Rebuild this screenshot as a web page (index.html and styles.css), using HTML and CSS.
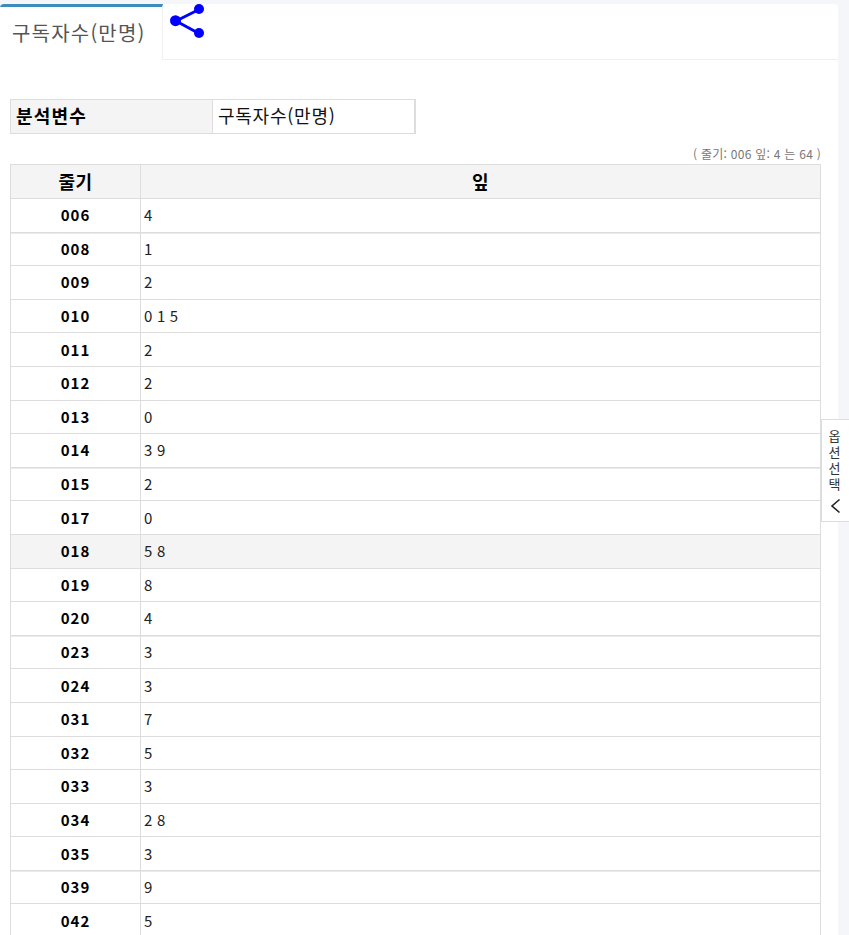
FILE: index.html
```html
<!DOCTYPE html>
<html lang="ko">
<head>
<meta charset="utf-8">
<title>줄기 잎</title>
<link rel="stylesheet" href="styles.css">
</head>
<body>
<div class="card">
  <div class="tabs">
    <div class="tab">구독자수(만명)</div>
    <div class="tab-share">
      <svg class="share" width="40" height="40" viewBox="0 0 40 40">
        <g fill="#0000ff" stroke="#0000ff">
          <path d="M29 5.500 6 17M6 17 29 29.500" stroke-width="3" fill="none"/>
          <circle cx="29" cy="5" r="5" stroke="none"/>
          <circle cx="5.500" cy="16.700" r="5.500" stroke="none"/>
          <circle cx="29" cy="29" r="5" stroke="none"/>
        </g>
      </svg>
    </div>
  </div>
  <div class="content">
    <table class="vars">
      <tr><th>분석변수</th><td>구독자수(만명)</td></tr>
    </table>
    <p class="note">( 줄기: 006 잎: 4 는 64 )</p>
    <table class="stem">
      <thead><tr><th class="c1">줄기</th><th>잎</th></tr></thead>
      <tbody>
        <tr class="thick"><th>006</th><td>4</td></tr>
        <tr><th>008</th><td>1</td></tr>
        <tr><th>009</th><td>2</td></tr>
        <tr><th>010</th><td>0 1 5</td></tr>
        <tr><th>011</th><td>2</td></tr>
        <tr><th>012</th><td>2</td></tr>
        <tr><th>013</th><td>0</td></tr>
        <tr class="thick"><th>014</th><td>3 9</td></tr>
        <tr><th>015</th><td>2</td></tr>
        <tr><th>017</th><td>0</td></tr>
        <tr class="hover"><th>018</th><td>5 8</td></tr>
        <tr><th>019</th><td>8</td></tr>
        <tr class="thick"><th>020</th><td>4</td></tr>
        <tr><th>023</th><td>3</td></tr>
        <tr><th>024</th><td>3</td></tr>
        <tr><th>031</th><td>7</td></tr>
        <tr><th>032</th><td>5</td></tr>
        <tr><th>033</th><td>3</td></tr>
        <tr><th>034</th><td>2 8</td></tr>
        <tr class="thick"><th>035</th><td>3</td></tr>
        <tr><th>039</th><td>9</td></tr>
        <tr><th>042</th><td>5</td></tr>
      </tbody>
    </table>
  </div>
</div>
<div class="side">
  <span class="side-text">옵션선택</span>
  <svg class="chev" width="12" height="16" viewBox="0 0 12 16"><path d="M9.500 1.500 2 8 9.500 14.500" fill="none" stroke="#222" stroke-width="1.600"/></svg>
</div>
</body>
</html>
```
FILE: styles.css
```css
html, body { margin: 0; padding: 0; height: 935px; overflow: hidden; }
body {
  background: #f4f6f9;
  font-family: "Noto Sans CJK KR", "Noto Sans", sans-serif;
  color: #111;
  padding-top: 4px;
  box-sizing: border-box;
}
.card {
  width: 838px;
  background: #fff;
  border-radius: 4px 4px 0 0;
  height: 931px;
  overflow: hidden;
}
.tabs {
  display: flex;
  height: 55px;
  border-bottom: 1px solid #f0f0f0;
}
.tab {
  width: 163px;
  box-sizing: border-box;
  height: 56px;
  border-top: 3px solid #3c8dbc;
  border-right: 1px solid #f0f0f0;
  background: #fff;
  padding: 12px 0 0 12px;
  font-size: 20px;
  letter-spacing: 1.2px;
  line-height: 28px;
  white-space: nowrap;
  color: #555;
}
.tab-share { flex: 1; }
.share { display: block; margin: 0 0 0 7px; }
.content { padding: 39px 17px 0 10px; }
.vars {
  border-collapse: collapse;
  width: 406px;
  table-layout: fixed;
  font-size: 18px;
  letter-spacing: 0.75px;
  border-right: 2px solid #ddd;
}
.vars th, .vars td {
  border: 1px solid #ddd;
  height: 29px;
  padding: 0 5px 4px;
  text-align: left;
}
.vars th { width: 191px; background: #f4f4f4; font-weight: 700; letter-spacing: 1.2px; color: #000; }
.vars td { color: #111; }
.note {
  margin: 10px 0 0;
  height: 20px;
  text-align: right;
  font-size: 12px;
  letter-spacing: 0.26px;
  line-height: 20px;
  color: #777;
}
.stem {
  border-collapse: collapse;
  width: 811px;
  table-layout: fixed;
  font-size: 15px;
}
.stem th, .stem td {
  border: 1px solid #ddd;
  height: 32.6px;
  padding: 0 3px;
  line-height: 20px;
}
.stem thead th {
  background: #f4f4f4;
  font-size: 18px;
  letter-spacing: 0.5px;
  color: #000;
  height: 31px;
  padding-bottom: 2px;
}
.stem .c1 { width: 123px; }
.stem tbody th { text-align: center; font-size: 15px; letter-spacing: 1px; color: #000; }
.stem td { text-align: left; letter-spacing: 0.2px; color: #222; }
.thick th, .thick td { box-shadow: 0 1.6px 0 #ddd; }
.hover th, .hover td { background: #f4f4f4; }
.side {
  position: absolute;
  left: 821px;
  top: 419px;
  width: 28px;
  height: 103px;
  box-sizing: border-box;
  background: #fff;
  border: 1px solid #ddd;
  border-right: 0;
  display: flex;
  flex-direction: column;
  align-items: center;
  padding-top: 10px;
  font-size: 13px;
  color: #333;
}
.side-text {
  writing-mode: vertical-rl;
  text-orientation: upright;
  letter-spacing: 3px;
  line-height: 16px;
  margin-right: 3px;
}
.chev { margin-top: 4px; }
```
